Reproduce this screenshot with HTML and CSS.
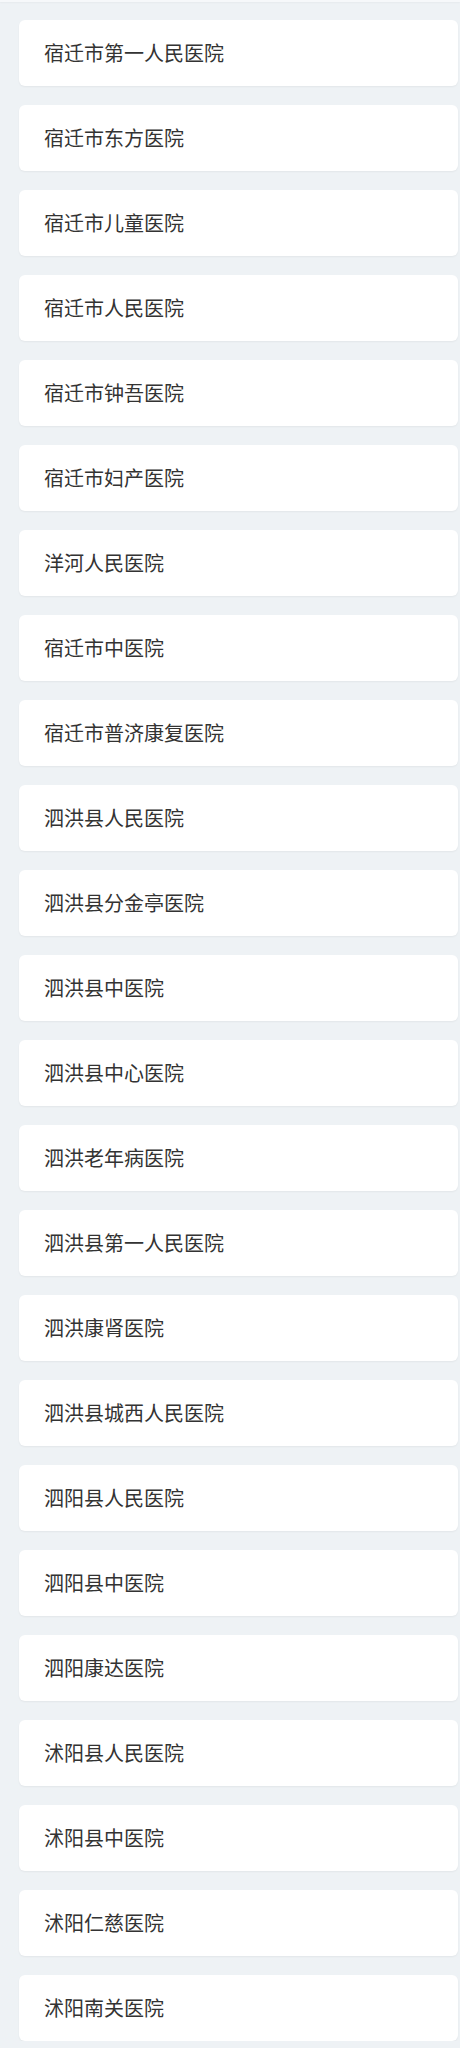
FILE: index.html
```html
<!DOCTYPE html>
<html lang="zh-CN">
<head>
<meta charset="utf-8">
<title>医院列表</title>
<link rel="stylesheet" href="styles.css">
</head>
<body>
<div class="topbar"></div>
<ul class="list">
  <li class="card">宿迁市第一人民医院</li>
  <li class="card">宿迁市东方医院</li>
  <li class="card">宿迁市儿童医院</li>
  <li class="card">宿迁市人民医院</li>
  <li class="card">宿迁市钟吾医院</li>
  <li class="card">宿迁市妇产医院</li>
  <li class="card">洋河人民医院</li>
  <li class="card">宿迁市中医院</li>
  <li class="card">宿迁市普济康复医院</li>
  <li class="card">泗洪县人民医院</li>
  <li class="card">泗洪县分金亭医院</li>
  <li class="card">泗洪县中医院</li>
  <li class="card">泗洪县中心医院</li>
  <li class="card">泗洪老年病医院</li>
  <li class="card">泗洪县第一人民医院</li>
  <li class="card">泗洪康肾医院</li>
  <li class="card">泗洪县城西人民医院</li>
  <li class="card">泗阳县人民医院</li>
  <li class="card">泗阳县中医院</li>
  <li class="card">泗阳康达医院</li>
  <li class="card">沭阳县人民医院</li>
  <li class="card">沭阳县中医院</li>
  <li class="card">沭阳仁慈医院</li>
  <li class="card">沭阳南关医院</li>
</ul>
</body>
</html>
```
FILE: styles.css
```css
html, body {
  margin: 0;
  padding: 0;
  background: #eef2f5;
}
body {
  font-family: "Noto Sans CJK SC", "Noto Sans", sans-serif;
  color: #333;
}
.topbar {
  height: 2px;
  background: #f6f8fa;
  box-shadow: 0 1px 2px rgba(0, 0, 0, 0.04);
}
.list {
  list-style: none;
  margin: 0;
  padding: 18px 2px 0 19px;
  display: flex;
  flex-direction: column;
  gap: 19px;
}
.card {
  height: 66px;
  box-sizing: border-box;
  background: #fff;
  border-radius: 6px;
  box-shadow: 0 1px 2px rgba(0, 0, 0, 0.05);
  display: flex;
  align-items: center;
  padding: 0 0 0 25px;
  font-size: 20px;
  line-height: 28px;
}
```
